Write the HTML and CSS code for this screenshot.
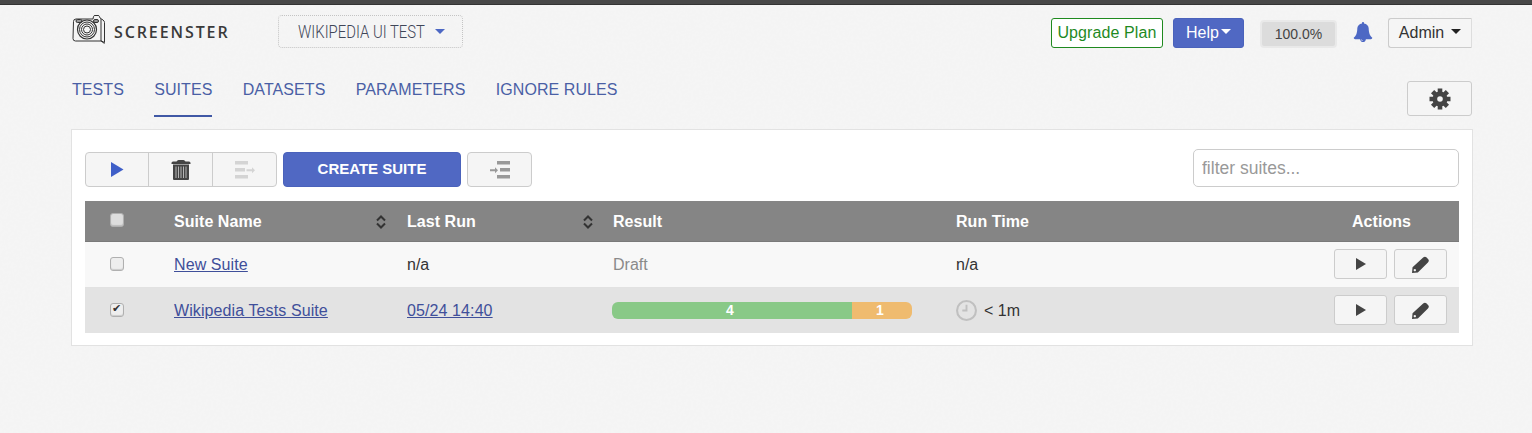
FILE: index.html
```html
<!DOCTYPE html>
<html lang="en">
<head>
<meta charset="utf-8">
<title>Screenster</title>
<link rel="stylesheet" href="styles.css">
</head>
<body>
<div class="topline"></div>
<div class="page">
  <header class="header">
    <a class="logo">
      <svg class="logo-icon" viewBox="0 0 34 32" width="34" height="32" fill="none" stroke="#333" stroke-width="1">
        <path d="M1.500 8.500q0-2.500 2.500-2.500h17l.5-2.500q.3-1 1.500-1h3q1.200 0 1.500 1l.5 1.500 3 2q1.500 1 1.500 2.500v20l-3-1.500h-26q-2.500 0-2.500-2.500z"/>
        <path d="M29 6v22M29 28l3.500 2.500"/>
        <rect x="4" y="6.500" width="6" height="3" rx="1.500" fill="#999"/>
        <rect x="21.500" y="6.500" width="5" height="3" rx="1.500" fill="#999"/>
        <circle cx="15" cy="16.500" r="9.500" stroke-width="1.200"/>
        <circle cx="15" cy="16.500" r="7.500"/>
        <circle cx="15" cy="16.500" r="5.500"/>
        <circle cx="15" cy="16.500" r="3.500"/>
      </svg>
      <span class="logo-text">SCREENSTER</span>
    </a>
    <button class="project"><span class="project-name">WIKIPEDIA UI TEST</span><i class="caret caret-blue"></i></button>
    <div class="header-right">
      <a class="upgrade">Upgrade Plan</a>
      <button class="help">Help<i class="caret caret-white"></i></button>
      <div class="usage">100.0%</div>
      <svg class="bell" viewBox="0 0 1792 1792" width="20" height="20"><path fill="#4d68c4" d="M912 1696q0-16-16-16-59 0-101.500-42.500t-42.500-101.500q0-16-16-16t-16 16q0 73 51.500 124.500t124.500 51.500q16 0 16-16zm816-288q0 52-38 90t-90 38h-448q0 106-75 181t-181 75-181-75-75-181h-448q-52 0-90-38t-38-90q50-42 91-88t85-119.500 74.500-158.500 50-206 19.500-260q0-152 117-282.500t307-158.500q-8-19-8-39 0-40 28-68t68-28 68 28 28 68q0 20-8 39 190 28 307 158.500t117 282.500q0 139 19.500 260t50 206 74.500 158.500 85 119.500 91 88z"/></svg>
      <button class="admin">Admin<i class="caret caret-dark"></i></button>
    </div>
  </header>

  <nav class="tabs">
    <a class="tab">TESTS</a>
    <a class="tab tab-active">SUITES</a>
    <a class="tab">DATASETS</a>
    <a class="tab">PARAMETERS</a>
    <a class="tab">IGNORE RULES</a>
    <button class="settings">
      <svg viewBox="0 0 22 22" width="22" height="22">
        <g stroke="#444" stroke-width="4.600">
          <path d="M11 0.500V21.500M0.500 11H21.500M3.600 3.600L18.400 18.400M18.400 3.600L3.600 18.400"/>
        </g>
        <circle cx="11" cy="11" r="7.500" fill="#444"/>
        <circle cx="11" cy="11" r="2.800" fill="#f5f5f5"/>
      </svg>
    </button>
  </nav>

  <main class="card">
    <div class="toolbar">
      <div class="btn-group">
        <button class="tool tool-run"><svg viewBox="0 0 14 14" width="14" height="15" preserveAspectRatio="none"><path fill="#3f5fc8" d="M1 0L13.500 7 1 14z"/></svg></button>
        <button class="tool tool-del">
          <svg viewBox="0 0 20 20" width="20" height="20">
            <rect x="3" y="5" width="14" height="14" fill="#b5b5b5"/>
            <path fill="#444" d="M.5 3q0-1.500 1.500-1.500h3.500q.8-1.500 2-1.500h5q1.200 0 2 1.500h3.500q1.500 0 1.500 1.500v1h-19z"/>
            <path fill="#444" fill-rule="evenodd" d="M2 4.500h16v14.500q0 1-1 1h-14q-1 0-1-1zM4.500 6.500v11.500h1v-11.500zM7 6.500v11.500h1v-11.500zM9.500 6.500v11.500h1v-11.500zM12 6.500v11.500h1v-11.500zM14.500 6.500v11.500h1v-11.500z"/>
          </svg>
        </button>
        <button class="tool tool-out">
          <svg viewBox="0 0 20 18" width="20" height="18" fill="#d4d4d4"><rect x="0" y="0" width="13" height="3.500"/><rect x="0" y="7" width="10" height="3.500"/><rect x="0" y="14" width="13" height="3.500"/><path d="M11.500 8.200h5.500v-2l3 3-3 3v-2h-5.500z"/></svg>
        </button>
      </div>
      <button class="create">CREATE SUITE</button>
      <button class="indent">
        <svg viewBox="0 0 20 18" width="20" height="18" fill="#999"><rect x="7" y="0" width="13" height="3.500"/><rect x="10" y="7" width="10" height="3.500"/><rect x="7" y="14" width="13" height="3.500"/><path d="M0 8.200h5v-2l3 3-3 3v-2h-5z"/></svg>
      </button>
      <input class="filter" type="text" placeholder="filter suites...">
    </div>

    <table class="suites">
      <colgroup>
        <col class="c-check"><col class="c-name"><col class="c-last"><col class="c-result"><col class="c-time"><col class="c-actions">
      </colgroup>
      <thead>
        <tr>
          <th class="cell-check"><input class="check check-head" type="checkbox"></th>
          <th><span class="sortable">Suite Name<svg class="sort" viewBox="0 0 10 14" width="10" height="14" fill="none" stroke="#333" stroke-width="2"><path d="M1 5.500L5 1.500l4 4M1 8.500l4 4 4-4"/></svg></span></th>
          <th><span class="sortable">Last Run<svg class="sort" viewBox="0 0 10 14" width="10" height="14" fill="none" stroke="#333" stroke-width="2"><path d="M1 5.500L5 1.500l4 4M1 8.500l4 4 4-4"/></svg></span></th>
          <th>Result</th>
          <th>Run Time</th>
          <th class="head-actions">Actions</th>
        </tr>
      </thead>
      <tbody>
        <tr class="row-light">
          <td class="cell-check"><input class="check" type="checkbox"></td>
          <td><a class="link">New Suite</a></td>
          <td>n/a</td>
          <td class="draft">Draft</td>
          <td>n/a</td>
          <td class="cell-actions">
            <div class="actions">
              <button class="act"><svg viewBox="0 0 10 12" width="10" height="12"><path fill="#444" d="M0 0L10 6 0 12z"/></svg></button>
              <button class="act"><svg viewBox="0 0 16 16" width="17" height="17"><path fill="#444" fill-rule="evenodd" d="M10.500 1.500q1.500-1.500 3-.3l1.800 1.800q1.200 1.500-.3 3L5.500 15.500 0 16l.5-5.500zM2.600 12.200a1.100 1.100 0 1 0 .1 0z"/></svg></button>
            </div>
          </td>
        </tr>
        <tr class="row-dark">
          <td class="cell-check"><input class="check" type="checkbox" checked></td>
          <td><a class="link">Wikipedia Tests Suite</a></td>
          <td><a class="link">05/24 14:40</a></td>
          <td>
            <div class="bar">
              <div class="bar-pass">4</div>
              <div class="bar-warn">1</div>
            </div>
          </td>
          <td>
            <div class="time">
              <svg viewBox="0 0 20 20" width="21" height="21" fill="none" stroke="#c0c0c0" stroke-width="2"><circle cx="10" cy="10" r="9"/><path d="M10 4.500v5.500h-4" stroke-width="1.800"/></svg>
              <span>&lt; 1m</span>
            </div>
          </td>
          <td class="cell-actions">
            <div class="actions">
              <button class="act"><svg viewBox="0 0 10 12" width="10" height="12"><path fill="#444" d="M0 0L10 6 0 12z"/></svg></button>
              <button class="act"><svg viewBox="0 0 16 16" width="17" height="17"><path fill="#444" fill-rule="evenodd" d="M10.500 1.500q1.500-1.500 3-.3l1.800 1.800q1.200 1.500-.3 3L5.500 15.500 0 16l.5-5.500zM2.600 12.200a1.100 1.100 0 1 0 .1 0z"/></svg></button>
            </div>
          </td>
        </tr>
      </tbody>
    </table>
  </main>
</div>
</body>
</html>
```
FILE: styles.css
```css
* { box-sizing: border-box; }
html, body { margin: 0; height: 100%; }
body {
  background-color: #f4f4f4;
  background-image: url("data:image/svg+xml,%3Csvg xmlns='http://www.w3.org/2000/svg' width='240' height='240'%3E%3Cfilter id='n'%3E%3CfeTurbulence type='fractalNoise' baseFrequency='.35' numOctaves='2' stitchTiles='stitch'/%3E%3CfeColorMatrix values='0 0 0 0 1 0 0 0 0 1 0 0 0 0 1 .7 0 0 0 -.25'/%3E%3C/filter%3E%3Crect width='240' height='240' filter='url(%23n)' opacity='.35'/%3E%3C/svg%3E");
  font-family: "Liberation Sans", Arial, sans-serif;
  font-size: 16px;
  color: #333;
  overflow: hidden;
}
button { font-family: inherit; cursor: pointer; padding: 0; }

.topline { height: 5px; background: #484848; border-bottom: 1px solid #333; }

.page { padding: 0 60px 0 71px; }

/* header */
.header { display: flex; align-items: flex-start; height: 48px; padding-left: 1px; }
.logo { display: flex; align-items: center; gap: 8px; margin-top: 8px; width: 206px; }
.logo-text {
  font-family: "Open Sans", sans-serif;
  font-weight: 600;
  font-size: 16px;
  letter-spacing: 1.9px;
  color: #3a3a3a;
  padding-top: 5px;
}
.project {
  width: 185px;
  height: 33px;
  margin-top: 10px;
  padding-left: 19px;
  background: transparent;
  border: 1px dotted #c4c4c4;
  border-radius: 4px;
  color: #3f4658;
  display: flex;
  align-items: center;
  gap: 10px;
}
.project-name {
  display: block;
  width: 127px;
  font-family: "Roboto", sans-serif;
  font-weight: 300;
  font-size: 18px;
  white-space: nowrap;
  transform: scaleX(.825);
  transform-origin: left center;
}
.caret { display: inline-block; width: 0; height: 0; border-style: solid; border-color: transparent; border-width: 5px 5px 0; }
.caret-blue { border-top-color: #4d68c4; border-width: 5px 5px 0; }
.caret-white { border-top-color: #fff; margin-left: 2px; margin-top: -3px; }
.caret-dark { border-top-color: #222; margin-left: 7px; margin-top: -3px; border-width: 5px 5.5px 0; }

.header-right { margin-left: auto; display: flex; align-items: flex-start; margin-top: 13px; }
.upgrade {
  width: 112px; height: 30px;
  display: flex; align-items: center; justify-content: center;
  background: #fff;
  border: 1px solid #1f8a1f;
  border-radius: 3px;
  color: #1f8a1f;
  letter-spacing: 0.1px;
}
.help {
  width: 71px; height: 30px;
  margin-left: 10px;
  background: #5068c3;
  border: 1px solid #4a62bb;
  border-radius: 3px;
  color: #fff;
  font-size: 16px;
  display: flex; align-items: center; justify-content: center;
}
.usage {
  width: 77px; height: 28px;
  margin: 2px 0 0 16px;
  background: #dcdcdc;
  border: 2px solid #e9e9e9;
  border-radius: 4px;
  font-size: 14px;
  color: #444;
  display: flex; align-items: center; justify-content: center;
}
.bell { margin: 4px 0 0 16px; }
.admin {
  width: 84px; height: 30px;
  margin-left: 15px;
  background: #f5f5f5;
  border: 1px solid #ccc;
  border-right-color: #ddd;
  border-radius: 3px 0 0 3px;
  color: #333;
  font-size: 16px;
  display: flex; align-items: center; justify-content: center;
}

/* tabs */
.tabs { display: flex; align-items: flex-start; height: 76px; padding-left: 1px; gap: 30.3px; }
.tab { height: 64px; padding-top: 27px; color: #4a5fa5; line-height: 20px; font-size: 16px; letter-spacing: 0.07px; }
.tab-active { border-bottom: 2px solid #4058a5; }
.settings {
  margin: 28px 0 0 auto;
  width: 65px; height: 35px;
  background: #f5f5f5;
  border: 1px solid #ccc;
  border-radius: 3px;
  display: flex; align-items: center; justify-content: center;
}

/* card */
.card { width: 1402px; height: 217px; background: #fff; border: 1px solid #e2e2e2; padding: 19px 13px 0; }
.toolbar { display: flex; align-items: flex-start; height: 52px; }
.btn-group { display: flex; margin-top: 3px; height: 35px; width: 192px; background: #f5f5f5; border: 1px solid #ccc; border-radius: 4px; }
.tool { background: transparent; border: 0; border-right: 1px solid #ccc; display: flex; align-items: center; justify-content: center; height: 100%; }
.tool-run { width: 63px; }
.tool-del { width: 64px; }
.tool-out { flex: 1; border-right: 0; }
.create {
  margin: 3px 0 0 6px;
  width: 178px; height: 35px;
  padding-bottom: 2px;
  background: #5068c3;
  border: 1px solid #4a62bb;
  border-radius: 4px;
  color: #fff;
  font-weight: 700;
  font-size: 15px;
}
.indent {
  margin: 3px 0 0 6px;
  width: 65px; height: 35px;
  background: #f5f5f5;
  border: 1px solid #ccc;
  border-radius: 4px;
  display: flex; align-items: center; justify-content: center;
}
.filter {
  margin-left: auto;
  width: 266px; height: 38px;
  border: 1px solid #ccc;
  border-radius: 5px;
  padding: 0 8px;
  font-family: inherit;
  font-size: 17.5px;
  outline: 0;
}
.filter::placeholder { color: #999; opacity: 1; }

/* table */
.suites { width: 1374px; border-collapse: separate; border-spacing: 0; table-layout: fixed; }
.c-check { width: 77px; }
.c-name { width: 233px; }
.c-last { width: 206px; }
.c-result { width: 343px; }
.c-time { width: 280px; }
.c-actions { width: 235px; }
.suites th {
  height: 41px;
  background: #858585;
  border-bottom: 1px solid #7a7a7a;
  color: #fff;
  font-size: 16px;
  font-weight: 700;
  letter-spacing: 0.05px;
  text-align: left;
  padding: 1px 12px 0;
}
.suites td { height: 46px; padding: 0 12px; font-size: 16px; color: #333; }
.row-light td { background: #f8f8f8; border-bottom: 1px solid #e2e2e2; }
.row-dark td { background: #e3e3e3; height: 45px; }
.suites th.cell-check, .suites td.cell-check { padding: 0 0 0 25px; }
.sortable { display: flex; align-items: center; justify-content: space-between; width: 212px; }
.suites th:nth-child(3) .sortable { width: 186px; }
.suites th.head-actions { text-align: right; padding-right: 48px; }
.check {
  appearance: none;
  display: block;
  position: relative;
  margin: -2px 0 0;
  width: 14px; height: 14px;
  background: #eee;
  border: 1px solid #b0b0b0;
  border-radius: 3px;
  box-shadow: inset 0 -1px 1px rgba(0,0,0,.15);
}
.check-head { background: #ddd; margin-top: -2px; }
.check:checked::after {
  content: "✔";
  position: absolute;
  left: 1px; top: -2px;
  font-family: "DejaVu Sans", sans-serif;
  font-size: 11px;
  color: #333;
}
.link { color: #3f4f9a; text-decoration: underline; letter-spacing: 0.1px; }
.suites td.draft { color: #8a8a8a; }

.bar {
  display: flex;
  width: 300px; height: 17px;
  margin-left: -1px;
  border-radius: 6px;
  overflow: hidden;
  color: #fff;
  font-size: 14px;
  font-weight: 700;
  line-height: 17px;
  text-align: center;
}
.bar-pass { width: 240px; padding-right: 4px; background: #89c987; }
.bar-warn { width: 60px; padding-right: 4px; background: #efbb6f; }
.time { display: flex; align-items: center; gap: 7px; }

.actions { display: flex; justify-content: flex-end; gap: 7px; margin-top: -1px; }
.act {
  width: 53px; height: 30px;
  background: #f5f5f5;
  border: 1px solid #ccc;
  border-radius: 3px;
  display: flex; align-items: center; justify-content: center;
}
```
